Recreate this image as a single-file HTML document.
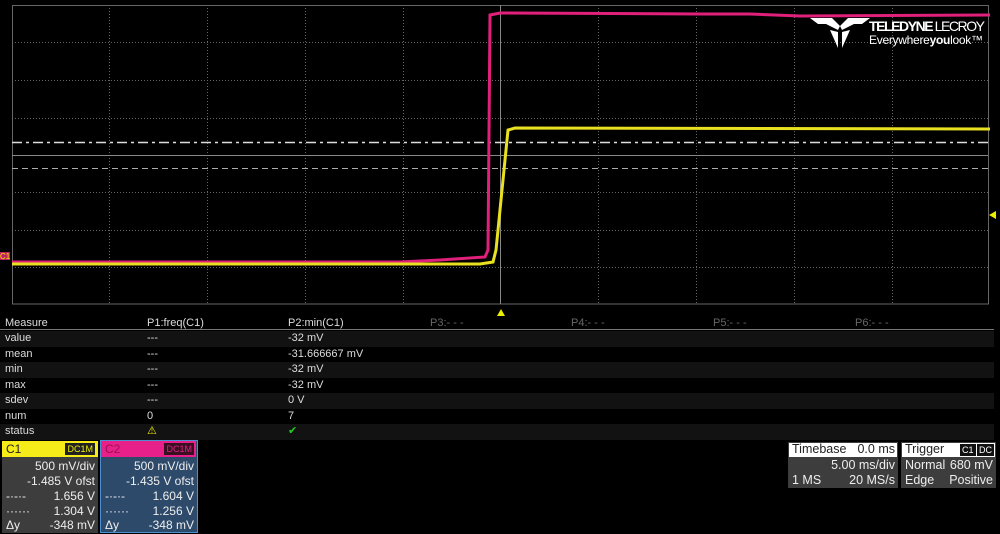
<!DOCTYPE html>
<html><head><meta charset="utf-8"><style>
*{margin:0;padding:0;box-sizing:border-box}
body{width:1000px;height:534px;background:#000;overflow:hidden;position:relative;font-family:"Liberation Sans",sans-serif;color:#ddd}
.a{position:absolute;white-space:nowrap}
.t{font-size:11px;line-height:15.5px}
.row{position:absolute;left:0;width:994px;height:15.5px}
.g{color:#666}
.box{position:absolute;background:#3d3d3d;font-size:12px;color:#eee}
.box .l{position:absolute;left:4px}
.box .r{position:absolute;right:3px}
</style></head><body>
<svg class="a" style="left:0;top:0" width="1000" height="320">
<g stroke="#666" stroke-width="1" stroke-dasharray="1,2" fill="none">
<line x1="12" y1="42.5" x2="988" y2="42.5"/><line x1="12" y1="80.5" x2="988" y2="80.5"/><line x1="12" y1="118.5" x2="988" y2="118.5"/><line x1="12" y1="192.5" x2="988" y2="192.5"/><line x1="12" y1="230.5" x2="988" y2="230.5"/><line x1="12" y1="267.5" x2="988" y2="267.5"/>
<line x1="109.5" y1="5" x2="109.5" y2="304"/><line x1="207.5" y1="5" x2="207.5" y2="304"/><line x1="305.5" y1="5" x2="305.5" y2="304"/><line x1="403.5" y1="5" x2="403.5" y2="304"/><line x1="598.5" y1="5" x2="598.5" y2="304"/><line x1="696.5" y1="5" x2="696.5" y2="304"/><line x1="794.5" y1="5" x2="794.5" y2="304"/><line x1="892.5" y1="5" x2="892.5" y2="304"/>
</g>
<rect x="12.5" y="5.5" width="976" height="298.5" fill="none" stroke="#666"/>
<line x1="12" y1="155.5" x2="988" y2="155.5" stroke="#888"/>
<line x1="500.5" y1="5" x2="500.5" y2="304" stroke="#888"/>
<line x1="12" y1="142.5" x2="988" y2="142.5" stroke="#ddd" stroke-width="1.5" stroke-dasharray="10,4,3,4"/>
<line x1="12" y1="168.5" x2="988" y2="168.5" stroke="#aaa" stroke-dasharray="6,4"/>
<polyline points="12,262 400,262 440,260 485,257 488,250 490,15 500,13 700,14 750,14 800,16 990,15" fill="none" stroke="#e0207a" stroke-width="3"/>
<polyline points="12,264 480,264 493,262 496,250 508,130 515,128 990,129" fill="none" stroke="#e8e020" stroke-width="3"/>
<polygon points="497,316 501,309 505,316" fill="#ee0"/>
<polygon points="989,215 996,211 996,219" fill="#ee0"/>
<rect x="0" y="252" width="10" height="8" fill="#c02060"/><text x="0" y="259" font-size="8" fill="#ee0" font-family="Liberation Sans">C1</text>
<polygon points="810,18 832,18 840,26 838,30 826,24 818,24" fill="#fff"/><polygon points="870,18 848,18 840,26 842,30 854,24 862,24" fill="#fff"/><polygon points="830,30 838,32 838,48" fill="#fff"/><polygon points="850,30 842,32 842,48" fill="#fff"/>
<text x="869" y="31" font-size="14" font-weight="bold" fill="#fff" font-family="Liberation Sans" textLength="116">TELEDYNE <tspan font-weight="normal">LECROY</tspan></text>
<text x="869" y="44" font-size="12" fill="#fff" font-family="Liberation Sans" textLength="114">Everywhere<tspan font-weight="bold">you</tspan>look™</text>
</svg>
<div class="a t" style="left:5px;top:316px">Measure</div>
<div class="a t" style="left:147px;top:316px">P1:freq(C1)</div>
<div class="a t" style="left:288px;top:316px">P2:min(C1)</div>
<div class="a t g" style="left:430px;top:316px">P3:- - -</div>
<div class="a t g" style="left:571px;top:316px">P4:- - -</div>
<div class="a t g" style="left:713px;top:316px">P5:- - -</div>
<div class="a t g" style="left:855px;top:316px">P6:- - -</div>
<div class="a" style="left:0;top:329px;width:994px;height:1px;background:#777"></div>
<div class="row" style="top:331px;background:#121212"></div>
<div class="row" style="top:362px;background:#121212"></div>
<div class="row" style="top:393px;background:#121212"></div>
<div class="row" style="top:424px;background:#121212"></div>
<div class="a t" style="left:5px;top:331px;line-height:15.5px">value<br>mean<br>min<br>max<br>sdev<br>num<br>status</div>
<div class="a t" style="left:147px;top:331px;line-height:15.5px">---<br>---<br>---<br>---<br>---<br>0<br><span style="color:#ee0">⚠</span></div>
<div class="a t" style="left:288px;top:331px;line-height:15.5px">-32 mV<br>-31.666667 mV<br>-32 mV<br>-32 mV<br>0 V<br>7<br><span style="color:#2c2">✔</span></div>

<div class="box" style="left:2px;top:441px;width:96px;height:92px">
<div class="a" style="left:0;top:0;width:96px;height:16px;background:#f5ec1a;color:#222;font-size:12px;padding-left:4px;line-height:16px">C1</div>
<div class="a" style="right:3px;top:2px;height:12px;background:#222;color:#ee0;font-size:9px;line-height:12px;padding:0 2px">DC1M</div>
<div class="r" style="top:18px">500 mV/div</div><div class="r" style="top:33px">-1.485 V ofst</div>
<div class="l" style="top:48px">-·-·-</div><div class="r" style="top:48px">1.656 V</div>
<div class="l" style="top:63px">······</div><div class="r" style="top:63px">1.304 V</div>
<div class="l" style="top:77px">Δy</div><div class="r" style="top:77px">-348 mV</div>
</div>
<div class="box" style="left:100px;top:440px;width:98px;height:93px;background:#2d4a6a;border:1.5px solid #4a90d0">
<div class="a" style="left:0;top:0;width:95px;height:16px;background:#e8208a;color:#a01050;font-size:12px;padding-left:4px;line-height:16px">C2</div>
<div class="a" style="right:3px;top:2px;height:12px;background:#3a1020;color:#e0208a;font-size:9px;line-height:12px;padding:0 2px">DC1M</div>
<div class="r" style="top:18px">500 mV/div</div><div class="r" style="top:33px">-1.435 V ofst</div>
<div class="l" style="top:48px">-·-·-</div><div class="r" style="top:48px">1.604 V</div>
<div class="l" style="top:63px">······</div><div class="r" style="top:63px">1.256 V</div>
<div class="l" style="top:77px">Δy</div><div class="r" style="top:77px">-348 mV</div>
</div>

<div class="box" style="left:788px;top:442px;width:110px;height:46px;font-size:12.5px">
<div class="a" style="left:1px;top:1px;width:108px;height:14px;background:#fff"></div>
<div class="l" style="top:0px;color:#222">Timebase</div><div class="r" style="top:0px;color:#222">0.0 ms</div>
<div class="r" style="top:16px">5.00 ms/div</div>
<div class="l" style="top:31px">1 MS</div><div class="r" style="top:31px">20 MS/s</div>
</div>
<div class="box" style="left:901px;top:442px;width:95px;height:46px;font-size:12.5px">
<div class="a" style="left:1px;top:1px;width:93px;height:14px;background:#fff"></div>
<div class="l" style="top:0px;color:#222">Trigger</div>
<div class="a" style="left:59px;top:2px;background:#111;color:#fff;font-size:9px;padding:0 2px;line-height:12px">C1</div>
<div class="a" style="left:76px;top:2px;background:#111;color:#fff;font-size:9px;padding:0 2px;line-height:12px">DC</div>
<div class="l" style="top:16px">Normal</div><div class="r" style="top:16px">680 mV</div>
<div class="l" style="top:31px">Edge</div><div class="r" style="top:31px">Positive</div>
</div>
</body></html>
